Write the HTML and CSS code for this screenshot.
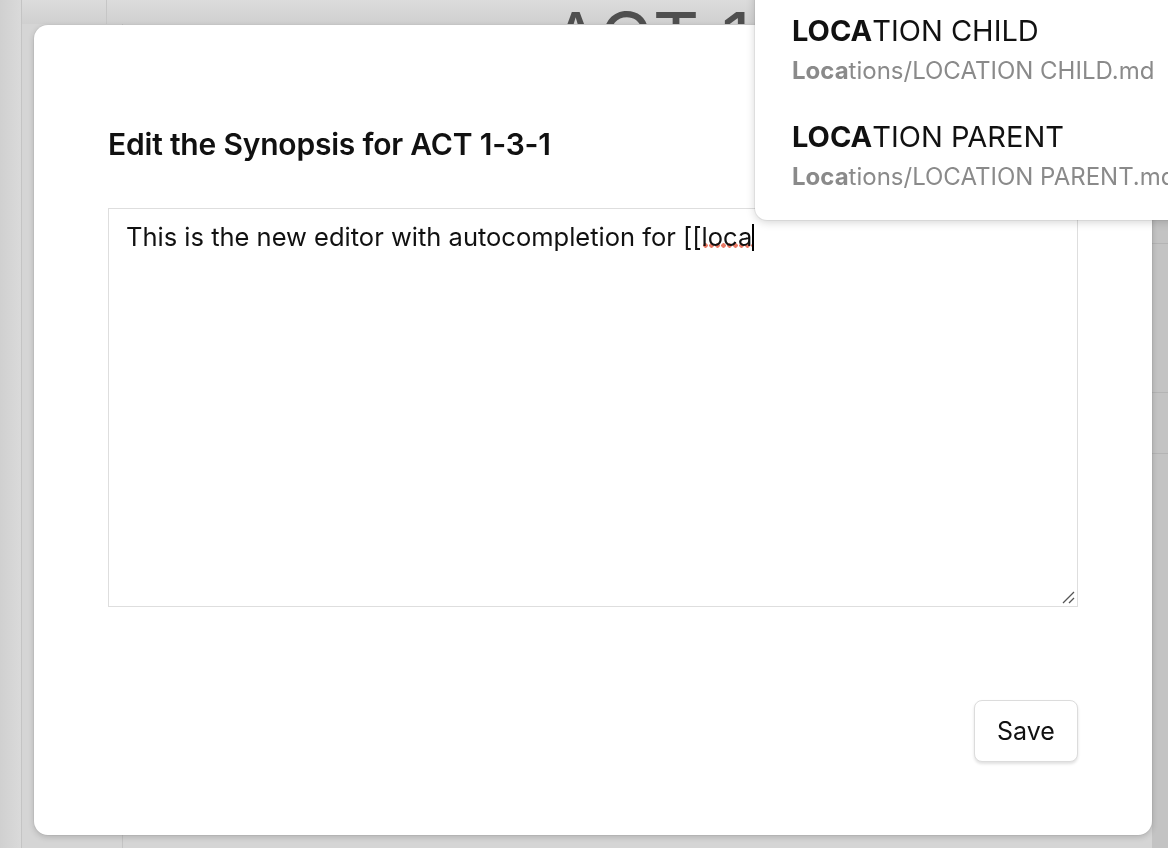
FILE: index.html
```html
<!DOCTYPE html>
<html>
<head>
<meta charset="utf-8">
<link rel="stylesheet" href="styles.css">
</head>
<body>
<div class="backdrop">
  <div class="rail"></div>
  <div class="main">
    <div class="topbar">
      <div class="seg"></div>
      <div class="doc-title">ACT 1-1</div>
    </div>
    <div class="body-area">
      <div class="col-a"></div>
      <div class="col-b"></div>
    </div>
  </div>
  <div class="right-strip">
    <div class="rs rs1"></div>
    <div class="rs rs2"></div>
    <div class="rs rs3"></div>
  </div>
</div>

<div class="modal">
  <h2 class="modal-title">Edit the Synopsis for ACT 1-3-1</h2>
  <div class="editor">
    <div class="editor-text">This is the new editor with autocompletion for [[<span class="misspelt">loca</span><span class="caret"></span></div>
    <svg class="grip" width="14" height="14" viewBox="0 0 14 14"><path d="M13 2 L2 13 M13 8 L8 13" stroke="#555" stroke-width="1.3" fill="none"/></svg>
  </div>
  <div class="actions">
    <button class="save">Save</button>
  </div>
</div>

<div class="suggest">
  <div class="item">
    <div class="item-title"><b>LOCA</b>TION CHILD</div>
    <div class="item-path"><b>Loca</b>tions/LOCATION CHILD.md</div>
  </div>
  <div class="item">
    <div class="item-title"><b>LOCA</b>TION PARENT</div>
    <div class="item-path"><b>Loca</b>tions/LOCATION PARENT.md</div>
  </div>
</div>
</body>
</html>
```

FILE: styles.css
```css
html, body {
  margin: 0;
  padding: 0;
  width: 1168px;
  height: 848px;
  overflow: hidden;
  font-family: Inter, "Noto Sans", sans-serif;
}
body {
  background: #d3d3d3;
}
.backdrop {
  display: flex;
  height: 848px;
}
.rail {
  width: 21px;
  background: linear-gradient(to right, #d0d0d0, #dadada);
  border-right: 1px solid #c4c4c4;
}
.main {
  flex: 1;
  display: flex;
  flex-direction: column;
}
.topbar {
  height: 24px;
  display: flex;
  background: linear-gradient(to bottom, #dcdcdc, #d0d0d0);
  overflow: hidden;
}
.seg {
  width: 84px;
  border-right: 1px solid #c6c6c6;
}
.doc-title {
  margin-left: 444px;
  margin-top: 2px;
  font-size: 72px;
  font-weight: 400;
  color: #4f4f4f;
  line-height: 72px;
  letter-spacing: 1px;
  white-space: nowrap;
}
.body-area {
  flex: 1;
  display: flex;
  background: #d5d5d5;
}
.col-a {
  width: 100px;
  border-right: 1px solid #c4c4c4;
}
.col-b {
  flex: 1;
}
.right-strip {
  width: 16px;
  background: #c3c3c3;
  display: flex;
  flex-direction: column;
}
.rs {
  border-top: 1px solid #b4b4b4;
}
.rs1 { margin-top: 243px; }
.rs2 { margin-top: 148px; }
.rs3 { margin-top: 60px; }

.modal {
  position: fixed;
  left: 34px;
  top: 25px;
  width: 1118px;
  height: 810px;
  box-sizing: border-box;
  background: #fff;
  border-radius: 14px;
  box-shadow: 0 2px 6px rgba(0,0,0,0.18), 0 0 0 1px rgba(0,0,0,0.04);
  padding: 101px 74px 0 74px;
  display: flex;
  flex-direction: column;
}
.modal-title {
  margin: 0;
  font-size: 30px;
  font-weight: 600;
  color: #111;
  line-height: 36px;
  letter-spacing: -0.2px;
  white-space: nowrap;
}
.editor {
  margin-top: 46px;
  height: 399px;
  border: 1px solid #dedede;
  position: relative;
  box-sizing: border-box;
  padding: 13px 17px;
}
.editor-text {
  font-size: 25.5px;
  line-height: 30px;
  color: #111;
  white-space: nowrap;
}
.misspelt {
  background-image: radial-gradient(circle at 2.5px 2.5px, #ea7a66 2px, transparent 2.5px);
  background-size: 6px 5px;
  background-repeat: repeat-x;
  background-position: 1px 22px;
}
.caret {
  display: inline-block;
  width: 1.5px;
  height: 27px;
  background: #000;
  vertical-align: -5px;
}
.grip {
  position: absolute;
  right: 2px;
  bottom: 2px;
}
.actions {
  display: flex;
  justify-content: flex-end;
  margin-top: 93px;
}
.save {
  width: 104px;
  height: 62px;
  background: #fff;
  border: 1px solid #dcdcdc;
  border-radius: 8px;
  box-shadow: 0 2px 3px rgba(0,0,0,0.12);
  font-family: Inter, "Noto Sans", sans-serif;
  font-size: 25px;
  color: #111;
  padding: 0;
}

.suggest {
  position: fixed;
  left: 755px;
  top: -20px;
  width: 440px;
  box-sizing: border-box;
  background: #fff;
  border-radius: 12px;
  box-shadow: 0 2px 10px rgba(0,0,0,0.18), 0 0 0 1px rgba(0,0,0,0.05);
  padding: 34px 0 27px 37px;
  display: flex;
  flex-direction: column;
  gap: 33px;
}
.item-title {
  font-size: 29px;
  line-height: 34px;
  color: #111;
  white-space: nowrap;
}
.item-title b {
  font-weight: 700;
}
.item-path {
  margin-top: 7px;
  font-size: 24px;
  line-height: 32px;
  color: #8a8a8a;
  white-space: nowrap;
}
.item-path b {
  font-weight: 700;
}
```
